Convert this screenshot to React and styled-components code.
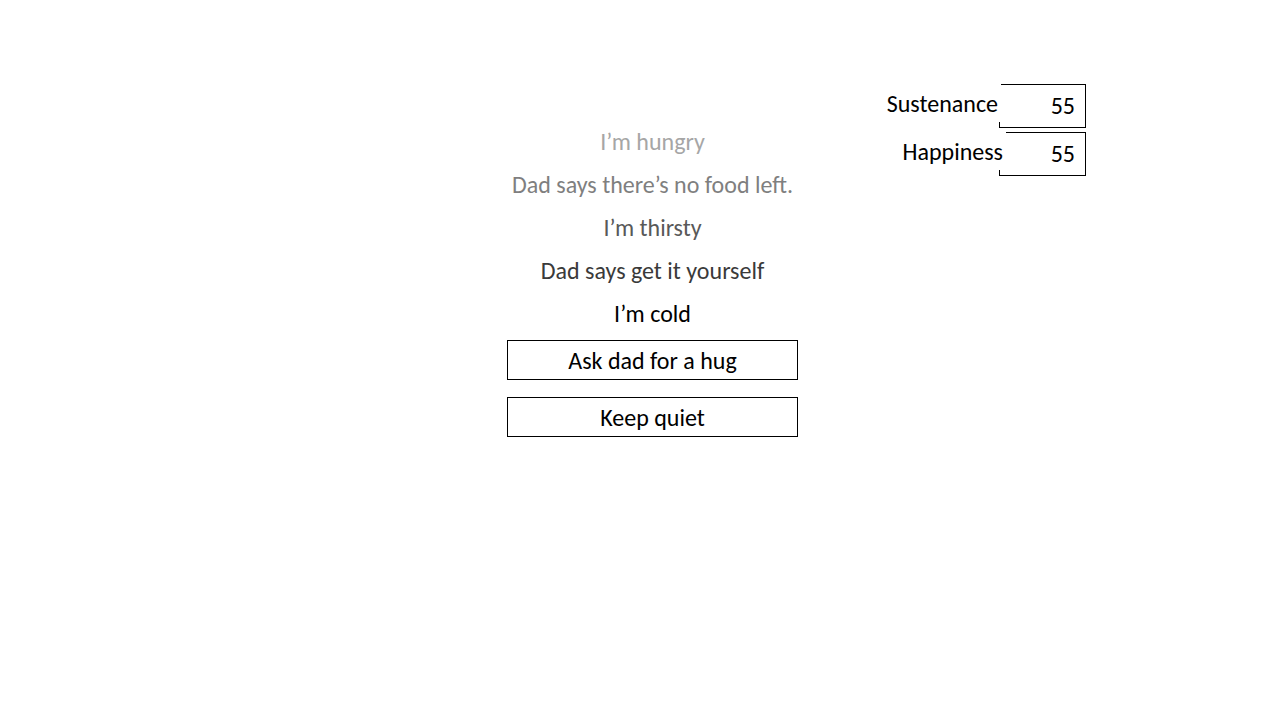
import React from "react";
import styled, { createGlobalStyle } from "styled-components";

const GlobalStyle = createGlobalStyle`
    html, body {
        margin: 0;
        padding: 0;
        background: #ffffff;
    }
    body {
        font-family: Carlito, Calibri, Lato, "Liberation Sans", sans-serif;
    }
`;

const Page = styled.div`
    width: 1280px;
    height: 720px;
    display: flex;
    align-items: flex-start;
    padding: 84px 194px 0 507px;
    box-sizing: border-box;
`;

const StoryColumn = styled.div`
    width: 291px;
    margin-top: 36px;
    display: flex;
    flex-direction: column;
`;

const Line = styled.div`
    height: 43px;
    line-height: 43px;
    text-align: center;
    font-size: 24px;
    color: ${(p) => p.$tone};
    white-space: nowrap;
`;

const Choices = styled.div`
    margin-top: 5px;
    display: flex;
    flex-direction: column;
    gap: 17px;
`;

const ChoiceButton = styled.button`
    width: 291px;
    height: 40px;
    box-sizing: border-box;
    border: 1px solid #000;
    background: #fff;
    font-family: inherit;
    font-size: 24px;
    color: #000;
    padding: 0;
    cursor: pointer;
`;

const Stats = styled.div`
    margin-left: auto;
    display: flex;
    flex-direction: column;
    align-items: flex-end;
    gap: 4px;
`;

const StatRow = styled.div`
    display: flex;
    align-items: flex-start;
`;

const StatLabel = styled.div`
    position: relative;
    z-index: 1;
    height: 38px;
    line-height: 40px;
    padding-right: 3px;
    background: #fff;
    font-size: 24px;
    color: #000;
    margin-right: ${(p) => p.$overlap}px;
    white-space: nowrap;
`;

const StatBox = styled.div`
    width: 87px;
    height: 44px;
    box-sizing: border-box;
    border: 1px solid #000;
    padding-right: 10px;
    text-align: right;
    line-height: 42px;
    font-size: 24px;
    color: #000;
`;

const story = [
    { text: "I\u2019m hungry", tone: "#a6a6a6" },
    { text: "Dad says there\u2019s no food left.", tone: "#7f7f7f" },
    { text: "I\u2019m thirsty", tone: "#595959" },
    { text: "Dad says get it yourself", tone: "#3a3a3a" },
    { text: "I\u2019m cold", tone: "#000000" },
];

const stats = [
    { name: "Sustenance", value: 55, overlap: -2 },
    { name: "Happiness", value: 55, overlap: -7 },
];

const App = () => {
    return (
        <>
            <GlobalStyle />
            <Page>
                <StoryColumn>
                    {story.map((l) => (
                        <Line key={l.text} $tone={l.tone}>{l.text}</Line>
                    ))}
                    <Choices>
                        <ChoiceButton>Ask dad for a hug</ChoiceButton>
                        <ChoiceButton>Keep quiet</ChoiceButton>
                    </Choices>
                </StoryColumn>
                <Stats>
                    {stats.map((s) => (
                        <StatRow key={s.name}>
                            <StatLabel $overlap={s.overlap}>{s.name}</StatLabel>
                            <StatBox>{s.value}</StatBox>
                        </StatRow>
                    ))}
                </Stats>
            </Page>
        </>
    );
};

export default App;
